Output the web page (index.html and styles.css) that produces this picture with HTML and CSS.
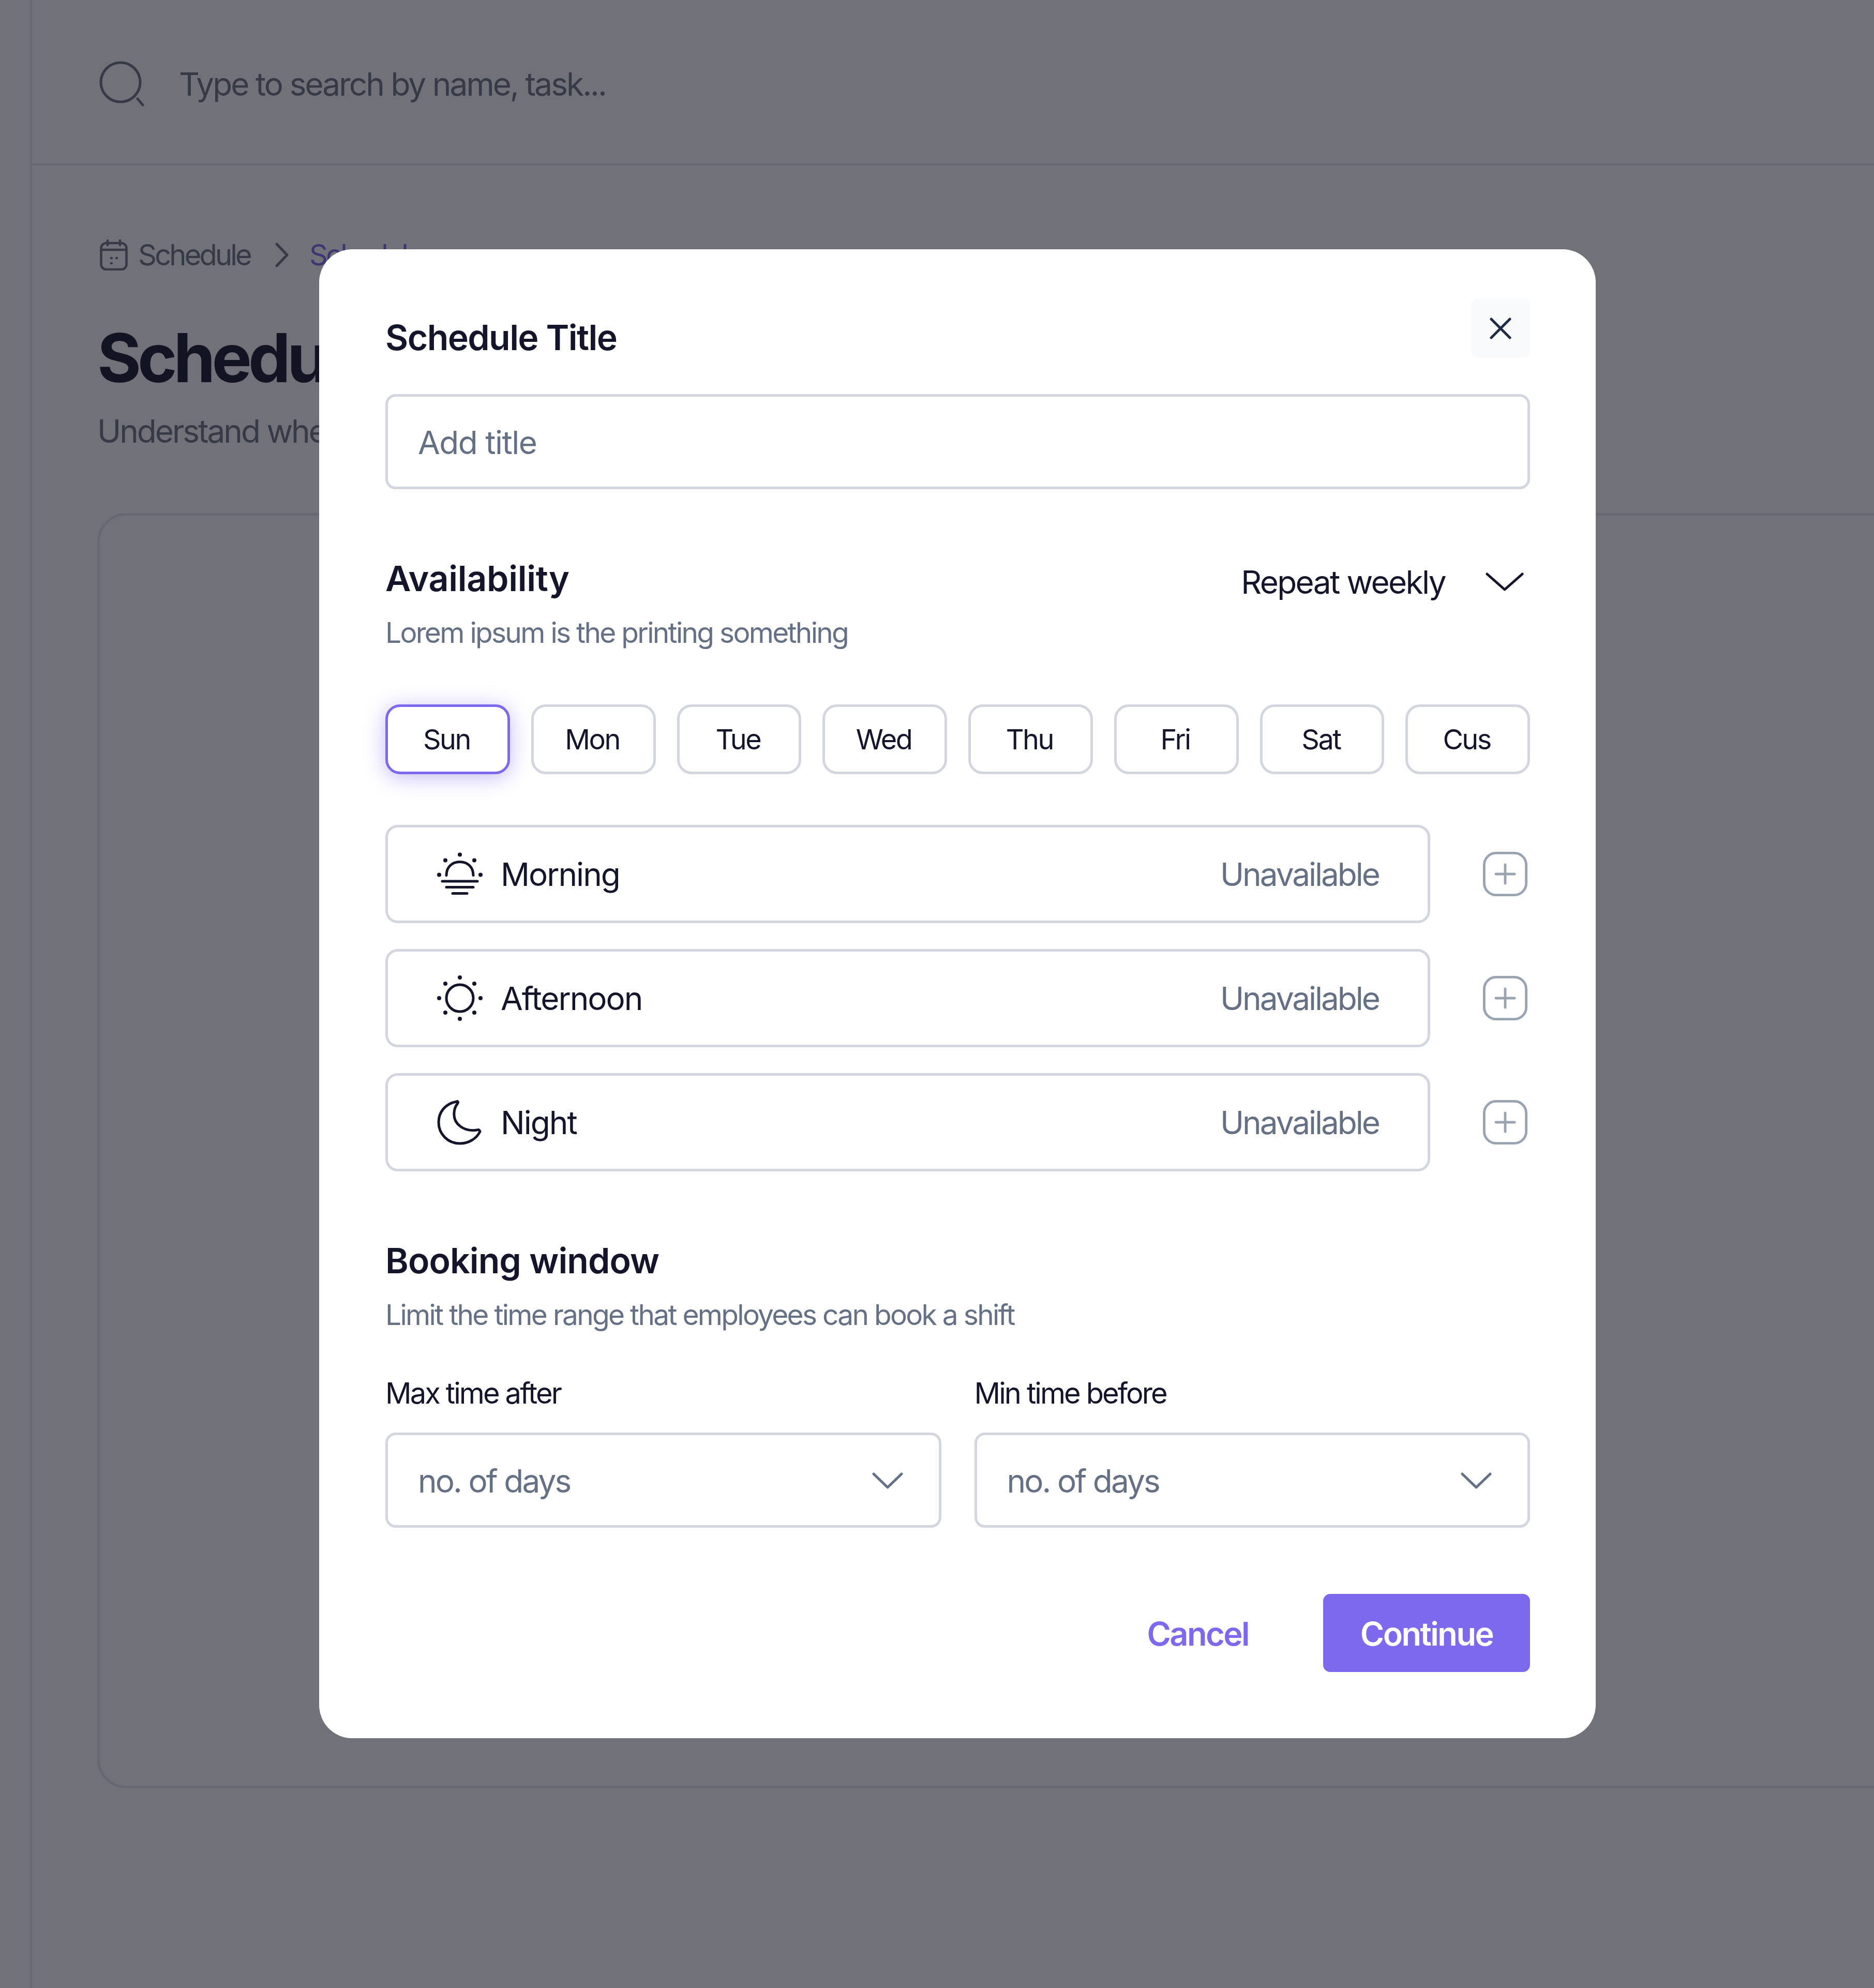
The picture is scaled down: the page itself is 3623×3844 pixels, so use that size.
FILE: index.html
```html
<!DOCTYPE html>
<html lang="en">
<head>
    <meta charset="UTF-8">
    <meta name="viewport" content="width=device-width, initial-scale=1.0">
    <title>Schedule</title>
    <link rel="stylesheet" href="styles.css">
</head>
<body>
    <div class="page">
        <aside class="sidebar"></aside>
        <main class="main">
            <header class="search-bar">
                <svg class="search-icon" viewBox="0 0 88 88" fill="none" stroke="#6b7280" stroke-width="5" stroke-linecap="round">
                    <circle cx="41" cy="41" r="38"/>
                    <path d="M74 73l10 12"/>
                </svg>
                <span class="search-text">Type to search by name, task...</span>
            </header>
            <section class="content">
                <nav class="crumbs">
                    <svg class="crumb-cal" viewBox="0 0 54 60" fill="none" stroke="#6b7280" stroke-width="4.5" stroke-linecap="round">
                        <rect x="2.5" y="7" width="49" height="51" rx="10"/>
                        <path d="M2.5 20h49M15 2v9M39 2v9M22 36h1M32 36h1M22 46h1"/>
                    </svg>
                    <span class="crumb">Schedule</span>
                    <svg class="crumb-arrow" viewBox="0 0 26 48" fill="none" stroke="#6b7280" stroke-width="5" stroke-linecap="round" stroke-linejoin="round">
                        <path d="M3 3l20 21L3 45"/>
                    </svg>
                    <span class="crumb crumb-current">Schedule</span>
                </nav>
                <h1 class="page-title">Schedule</h1>
                <p class="page-sub">Understand when employees are available</p>
                <div class="card"></div>
            </section>
        </main>
    </div>

    <div class="overlay"></div>

    <div class="modal">
        <div class="modal-head">
            <h2 class="title title-main">Schedule Title</h2>
            <button class="close" type="button">
                <svg viewBox="0 0 42 42" fill="none" stroke="#1f2a44" stroke-width="5" stroke-linecap="round"><path d="M3 3l36 36M39 3L3 39"/></svg>
            </button>
        </div>
        <div class="field title-field"><span>Add title</span></div>

        <div class="section-head">
            <div>
                <h2 class="title title-avail">Availability</h2>
                <p class="sub">Lorem ipsum is the printing something</p>
            </div>
            <div class="repeat">
                <span>Repeat weekly</span>
                <svg viewBox="0 0 74 36" fill="none" stroke="#14152a" stroke-width="5" stroke-linecap="round" stroke-linejoin="round"><path d="M3 3l34 30L71 3"/></svg>
            </div>
        </div>

        <div class="days">
            <button class="day active" type="button">Sun</button>
            <button class="day" type="button">Mon</button>
            <button class="day" type="button">Tue</button>
            <button class="day" type="button">Wed</button>
            <button class="day" type="button">Thu</button>
            <button class="day" type="button">Fri</button>
            <button class="day" type="button">Sat</button>
            <button class="day" type="button">Cus</button>
        </div>

        <ul class="slots">
            <li class="slot-line">
                <div class="slot">
                    <svg class="slot-icon" viewBox="0 0 88 83" fill="none" stroke="#14152a" stroke-width="5" stroke-linecap="round">
                        <path d="M18 44c0-16 11-26 26-26s26 10 26 26M10 55.5h68M18 67h52M30 79h28"/>
                        <g fill="#14152a" stroke="none">
                            <circle cx="44" cy="4" r="4"/><circle cx="16" cy="15" r="4"/><circle cx="72" cy="15" r="4"/><circle cx="4" cy="43" r="4"/><circle cx="84" cy="43" r="4"/>
                        </g>
                    </svg>
                    <span class="slot-name">Morning</span>
                    <span class="slot-state">Unavailable</span>
                </div>
                <svg class="plus" viewBox="0 0 90 90" fill="none" stroke="#9aa3b2" stroke-width="5" stroke-linecap="round"><rect x="2.5" y="2.5" width="85" height="85" rx="24"/><path d="M45 26v38M26 45h38"/></svg>
            </li>
            <li class="slot-line">
                <div class="slot">
                    <svg class="slot-icon" viewBox="-44 -44 88 88" fill="none" stroke="#14152a" stroke-width="5">
                        <circle r="26"/>
                        <g fill="#14152a" stroke="none">
                            <circle cy="-40" r="4"/><circle cy="40" r="4"/><circle cx="-40" r="4"/><circle cx="40" r="4"/><circle cx="-28" cy="-28" r="4"/><circle cx="28" cy="-28" r="4"/><circle cx="-28" cy="28" r="4"/><circle cx="28" cy="28" r="4"/>
                        </g>
                    </svg>
                    <span class="slot-name">Afternoon</span>
                    <span class="slot-state">Unavailable</span>
                </div>
                <svg class="plus" viewBox="0 0 90 90" fill="none" stroke="#9aa3b2" stroke-width="5" stroke-linecap="round"><rect x="2.5" y="2.5" width="85" height="85" rx="24"/><path d="M45 26v38M26 45h38"/></svg>
            </li>
            <li class="slot-line">
                <div class="slot">
                    <svg class="slot-icon" viewBox="0 0 88 88" fill="none" stroke="#14152a" stroke-width="5" stroke-linejoin="round">
                        <path d="M38 4C16 8 3 24 3 44c0 23 18 41 41 41 17 0 32-9 39-23-1-3-3-4-6-3-25 4-46-12-44-33 0-9 4-15 7-19 1-2 0-4-2-3z"/>
                    </svg>
                    <span class="slot-name">Night</span>
                    <span class="slot-state">Unavailable</span>
                </div>
                <svg class="plus" viewBox="0 0 90 90" fill="none" stroke="#9aa3b2" stroke-width="5" stroke-linecap="round"><rect x="2.5" y="2.5" width="85" height="85" rx="24"/><path d="M45 26v38M26 45h38"/></svg>
            </li>
        </ul>

        <h2 class="title booking-title">Booking window</h2>
        <p class="sub">Limit the time range that employees can book a shift</p>

        <div class="selects">
            <div class="select-col">
                <label class="select-label">Max time after</label>
                <div class="field select-field">
                    <span>no. of days</span>
                    <svg viewBox="0 0 60 32" fill="none" stroke="#667085" stroke-width="5" stroke-linecap="round" stroke-linejoin="round"><path d="M3 3l27 26L57 3"/></svg>
                </div>
            </div>
            <div class="select-col">
                <label class="select-label">Min time before</label>
                <div class="field select-field">
                    <span>no. of days</span>
                    <svg viewBox="0 0 60 32" fill="none" stroke="#667085" stroke-width="5" stroke-linecap="round" stroke-linejoin="round"><path d="M3 3l27 26L57 3"/></svg>
                </div>
            </div>
        </div>

        <div class="actions">
            <button class="cancel" type="button">Cancel</button>
            <button class="continue" type="button">Continue</button>
        </div>
    </div>
</body>
</html>
```

FILE: styles.css
```css
* {
    box-sizing: border-box;
}

html, body {
    margin: 0;
    padding: 0;
}

body {
    width: 3623px;
    height: 3844px;
    overflow: hidden;
    position: relative;
    font-family: Inter, "Liberation Sans", sans-serif;
    color: #14152a;
    background-color: #fff;
}

/* page behind the dialog */
.page {
    display: flex;
    height: 100%;
}

.sidebar {
    width: 62px;
    flex: none;
    border-right: 4px solid #e5e7eb;
}

.main {
    flex: 1;
    min-width: 0;
    overflow: hidden;
}

.search-bar {
    display: flex;
    align-items: center;
    gap: 66px;
    height: 320px;
    padding: 8px 0 0 130px;
    border-bottom: 4px solid #e5e7eb;
}

.search-icon {
    width: 88px;
    height: 88px;
}

.search-text {
    font-size: 62px;
    letter-spacing: -2.9px;
    color: #6b7280;
}

.content {
    padding: 142px 0 0 126px;
}

.crumbs {
    display: flex;
    align-items: center;
    height: 62px;
    white-space: nowrap;
}

.crumb-cal {
    width: 54px;
    height: 60px;
    margin: 0 20px 0 5px;
}

.crumb {
    font-size: 56px;
    letter-spacing: -3.8px;
    color: #6b7280;
}

.crumb-arrow {
    width: 26px;
    height: 48px;
    margin: 0 40px 0 48px;
}

.crumb-current {
    color: #7c69ed;
}

.page-title {
    margin: 93px 0 0;
    font-size: 130px;
    line-height: 150px;
    font-weight: 700;
    letter-spacing: -7px;
    white-space: nowrap;
}

.page-sub {
    margin: 29px 0 0;
    font-size: 62px;
    line-height: 76px;
    letter-spacing: -3px;
    color: #6b7280;
    white-space: nowrap;
}

.card {
    height: 2466px;
    margin: 120px 0 0 0;
    width: 3600px;
    border: 5px solid #e5e7eb;
    border-radius: 56px;
}

.overlay {
    position: absolute;
    inset: 0;
    background-color: rgba(18, 20, 32, 0.6);
}

/* dialog */
.modal {
    position: absolute;
    left: 617px;
    top: 482px;
    width: 2468px;
    padding: 96px 127px 128px 128px;
    background-color: #fff;
    border-radius: 64px;
}

.modal-head {
    display: flex;
    justify-content: space-between;
    align-items: flex-end;
}

.title {
    margin: 0;
    font-size: 68px;
    line-height: 80px;
    font-weight: 600;
    letter-spacing: -0.9px;
}

.title-main {
    letter-spacing: -1.6px;
}

.title-avail {
    letter-spacing: -0.3px;
}

.close {
    width: 114px;
    height: 114px;
    padding: 0;
    border: none;
    border-radius: 12px;
    background-color: #f9fafb;
    display: flex;
    align-items: center;
    justify-content: center;
}

.close svg {
    width: 42px;
    height: 42px;
}

.field {
    height: 184px;
    border: 5px solid #d3d6de;
    border-radius: 20px;
    padding: 2px 60px 0 58px;
    display: flex;
    align-items: center;
    justify-content: space-between;
    font-size: 62px;
    letter-spacing: -1.5px;
    color: #667085;
}

.title-field {
    margin-top: 70px;
}

.section-head {
    display: flex;
    justify-content: space-between;
    margin-top: 132px;
}

.sub {
    margin: 30px 0 0;
    font-size: 55px;
    line-height: 70px;
    letter-spacing: -2.7px;
    color: #667085;
}

.repeat {
    display: flex;
    align-items: center;
    gap: 78px;
    height: 94px;
    padding-right: 12px;
    font-size: 62px;
    letter-spacing: -2.6px;
}

.repeat svg {
    width: 74px;
    height: 36px;
}

.days {
    display: grid;
    grid-template-columns: repeat(8, 1fr);
    gap: 41px;
    margin-top: 104px;
}

.day {
    height: 135px;
    padding: 0 4px 0 0;
    border: 5px solid #d3d6de;
    border-radius: 28px;
    background-color: #fff;
    font-family: inherit;
    font-size: 54px;
    letter-spacing: -2.5px;
    color: #14152a;
}

.day.active {
    border-color: #7c69ed;
    box-shadow: 0 6px 40px rgba(124, 105, 237, 0.45);
}

.slots {
    list-style-type: none;
    margin: 98px 0 0;
    padding: 0;
    display: flex;
    flex-direction: column;
    gap: 50px;
}

.slot-line {
    display: flex;
    align-items: center;
    justify-content: space-between;
}

.slot {
    width: 2020px;
    height: 190px;
    border: 5px solid #d3d6de;
    border-radius: 24px;
    padding: 0 94px 0 95px;
    display: flex;
    align-items: center;
}

.slot-icon {
    width: 88px;
    height: 88px;
    margin-right: 35px;
}

.slot-name {
    font-size: 62px;
    letter-spacing: -2px;
}

.slot-state {
    margin-left: auto;
    font-size: 62px;
    letter-spacing: -3px;
    color: #667085;
}

.plus {
    width: 86px;
    height: 86px;
    margin-right: 5px;
}

.booking-title {
    margin-top: 132px;
}

.selects {
    display: grid;
    grid-template-columns: 1fr 1fr;
    gap: 64px;
    margin-top: 82px;
}

.select-label {
    display: block;
    font-size: 56px;
    line-height: 70px;
    letter-spacing: -2.9px;
}

.select-field {
    margin-top: 41px;
    padding-right: 69px;
    letter-spacing: -2.9px;
}

.select-field svg {
    width: 60px;
    height: 32px;
}

.actions {
    display: flex;
    justify-content: flex-end;
    align-items: center;
    gap: 144px;
    margin-top: 128px;
}

.cancel, .continue {
    font-family: inherit;
    font-size: 63px;
    font-weight: 600;
    letter-spacing: -2.5px;
    border: none;
    padding: 2px 0 0;
    cursor: pointer;
}

.cancel {
    background: none;
    color: #7c69ed;
}

.continue {
    width: 400px;
    height: 151px;
    border-radius: 14px;
    background-color: #7c69ed;
    color: #fff;
}
```
